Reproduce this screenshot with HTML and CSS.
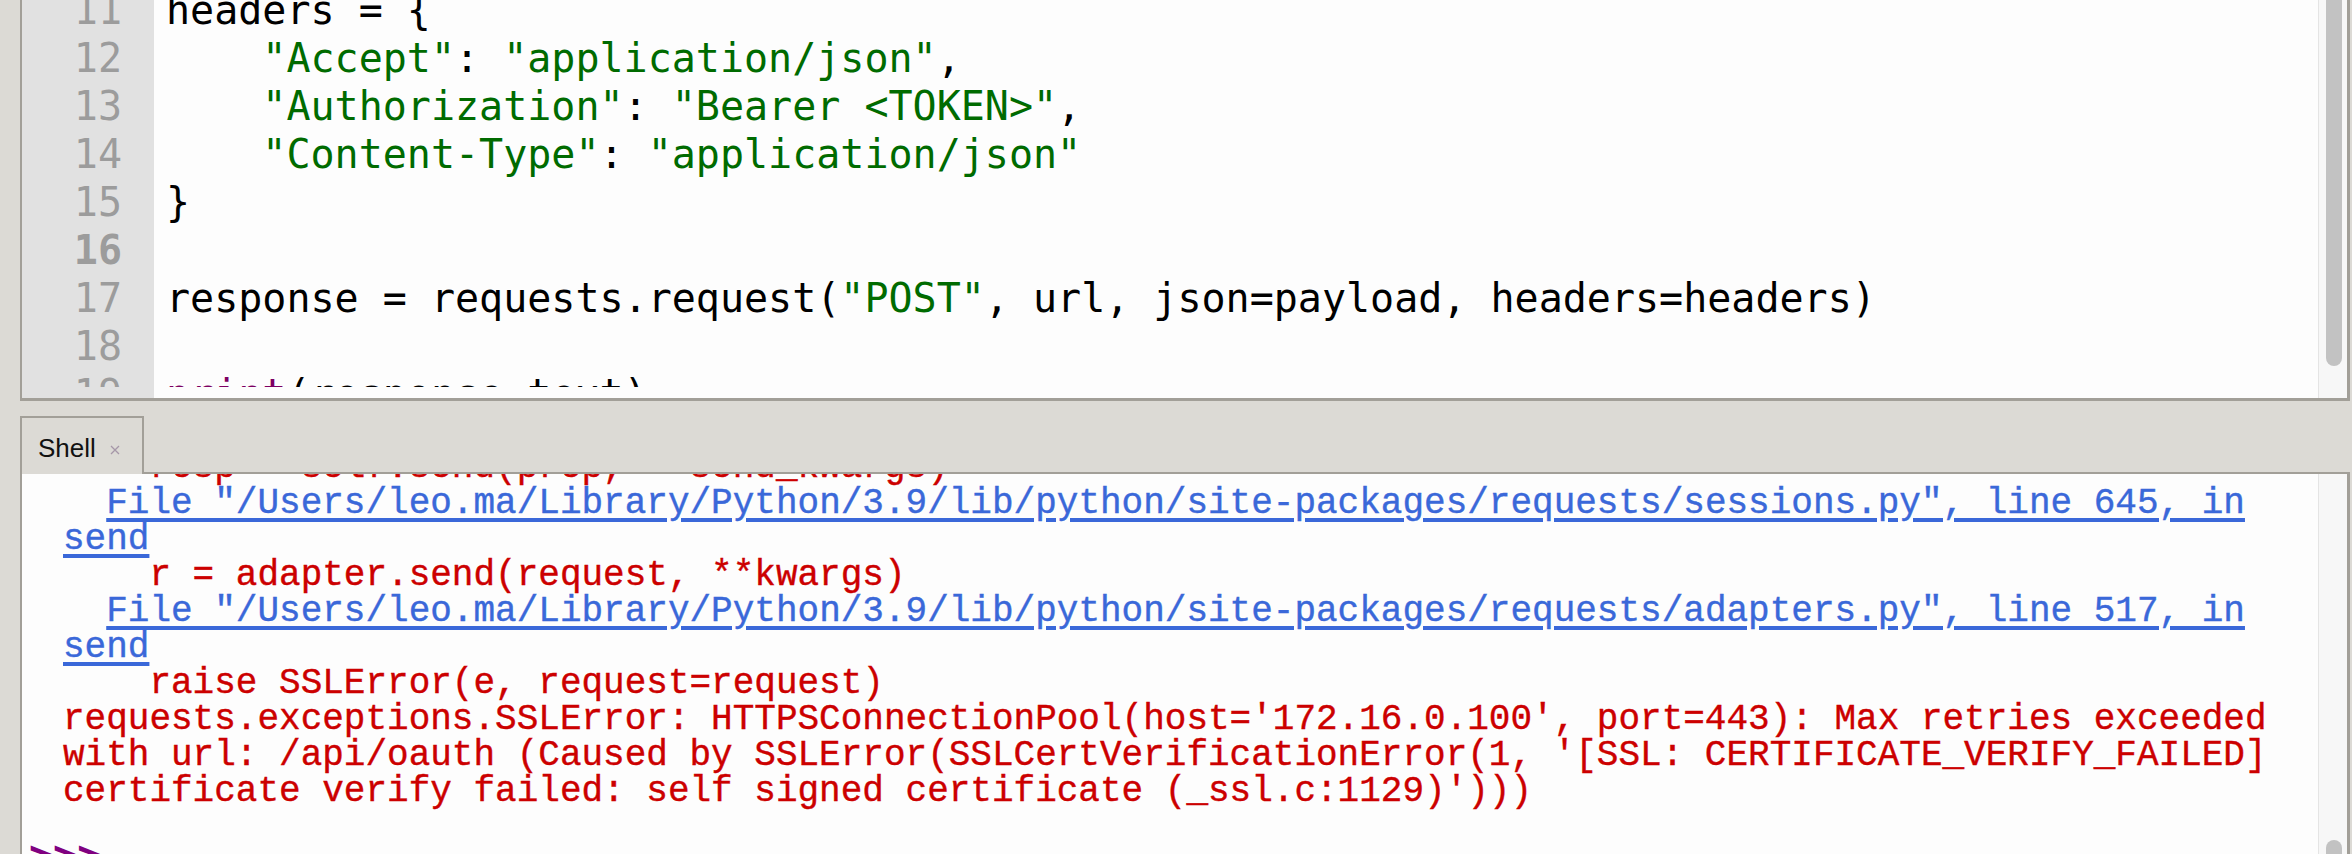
FILE: index.html
```html
<!DOCTYPE html>
<html>
<head>
<meta charset="utf-8">
<title>Thonny</title>
<link rel="stylesheet" href="styles.css">
</head>
<body>
<div class="app">
  <section class="editor">
    <div class="gutter">
      <div class="clip">
        <div class="ed-lines">
          <div class="ln">11</div>
          <div class="ln">12</div>
          <div class="ln">13</div>
          <div class="ln">14</div>
          <div class="ln">15</div>
          <div class="ln cur">16</div>
          <div class="ln">17</div>
          <div class="ln">18</div>
          <div class="ln">19</div>
        </div>
      </div>
    </div>
    <div class="code">
      <div class="clip">
        <div class="ed-lines">
          <div class="ln">headers = {</div>
          <div class="ln">    <span class="str">"Accept"</span>: <span class="str">"application/json"</span>,</div>
          <div class="ln">    <span class="str">"Authorization"</span>: <span class="str">"Bearer &lt;TOKEN&gt;"</span>,</div>
          <div class="ln">    <span class="str">"Content-Type"</span>: <span class="str">"application/json"</span></div>
          <div class="ln">}</div>
          <div class="ln"> </div>
          <div class="ln">response = requests.request(<span class="str">"POST"</span>, url, json=payload, headers=headers)</div>
          <div class="ln"> </div>
          <div class="ln"><span class="builtin">print</span>(response.text)</div>
        </div>
      </div>
    </div>
    <div class="vscroll"><div class="thumb thumb-top"></div></div>
  </section>

  <div class="tabbar">
    <div class="tab">
      <span class="tab-label">Shell</span>
      <svg class="tab-close" width="12" height="12" viewBox="0 0 12 12"><path d="M2 2 L10 10 M10 2 L2 10" stroke="#a697a8" stroke-width="1.3" fill="none"/></svg>
    </div>
    <div class="tabfill"></div>
  </div>

  <section class="shell">
    <div class="shell-text">
      <div class="sh-lines">
        <div class="sl out err">    resp = self.send(prep, **send_kwargs)</div>
        <div class="sl out">  <span class="link">File "/Users/leo.ma/Library/Python/3.9/lib/python/site-packages/requests/sessions.py", line 645, in</span></div>
        <div class="sl out"><span class="link">send</span></div>
        <div class="sl out err">    r = adapter.send(request, **kwargs)</div>
        <div class="sl out">  <span class="link">File "/Users/leo.ma/Library/Python/3.9/lib/python/site-packages/requests/adapters.py", line 517, in</span></div>
        <div class="sl out"><span class="link">send</span></div>
        <div class="sl out err">    raise SSLError(e, request=request)</div>
        <div class="sl out err">requests.exceptions.SSLError: HTTPSConnectionPool(host='172.16.0.100', port=443): Max retries exceeded</div>
        <div class="sl out err">with url: /api/oauth (Caused by SSLError(SSLCertVerificationError(1, '[SSL: CERTIFICATE_VERIFY_FAILED]</div>
        <div class="sl out err">certificate verify failed: self signed certificate (_ssl.c:1129)')))</div>
        <div class="sl out"> </div>
        <div class="sl prompt">&gt;&gt;&gt; </div>
      </div>
    </div>
    <div class="vscroll"><div class="thumb thumb-bottom"></div></div>
  </section>
</div>
</body>
</html>
```

FILE: styles.css
```css
* { box-sizing: border-box; }

html, body {
  margin: 0;
  padding: 0;
}

body {
  background: #dcdad5;
  width: 2352px;
  height: 854px;
  overflow: hidden;
}

.app {
  display: flex;
  flex-direction: column;
  height: 854px;
}

/* ---------- editor ---------- */
.editor {
  flex: none;
  display: flex;
  margin-left: 20px;
  width: 2330px;
  height: 401px;
  border-left: 2px solid #a29f98;
  border-right: 3px solid #a29f98;
  border-bottom: 3px solid #a29f98;
}

.gutter {
  flex: none;
  width: 132px;
  background: #e1e1e1;
}

.code {
  flex: 1;
  background: #fdfdfd;
}

.clip {
  height: 387px;
  overflow: hidden;
}

.ed-lines {
  margin-top: -14px;
  font-family: "DejaVu Sans Mono", monospace;
  font-size: 40px;
  line-height: 48px;
}

.ln {
  white-space: pre;
  height: 48px;
}

.gutter .ed-lines {
  text-align: right;
  padding-right: 32px;
  color: #9c9c9c;
}

.gutter .cur {
  font-weight: bold;
}

.code .ed-lines {
  padding-left: 12px;
  color: #000;
}

.str { color: #006b00; }
.builtin { color: #7d0062; }

/* ---------- scrollbars ---------- */
.vscroll {
  flex: none;
  width: 29px;
  background: #f7f7f7;
  border-left: 1px solid #e4e4e4;
  padding-left: 7px;
}

.thumb {
  width: 16px;
  background: #c2c2c2;
}

.thumb-top {
  height: 366px;
  border-radius: 0 0 8px 8px;
}

.thumb-bottom {
  margin-top: 366px;
  height: 40px;
  border-radius: 8px 8px 0 0;
}

/* ---------- tab bar ---------- */
.tabbar {
  flex: none;
  display: flex;
  margin-top: 15px;
  margin-left: 20px;
  width: 2330px;
  height: 58px;
}

.tab {
  flex: none;
  display: flex;
  align-items: flex-start;
  width: 124px;
  height: 58px;
  border-top: 2px solid #a29f98;
  border-left: 2px solid #a29f98;
  border-right: 2px solid #a29f98;
  background: #dcdad5;
  padding-left: 16px;
  padding-top: 4px;
}

.tab-label {
  font-family: "Liberation Sans", Arial, sans-serif;
  font-size: 26px;
  line-height: 52px;
  color: #111;
}

.tab-close {
  margin-left: 13px;
  margin-top: 22px;
}

.tabfill {
  flex: 1;
  border-bottom: 2px solid #a29f98;
}

/* ---------- shell ---------- */
.shell {
  flex: 1;
  display: flex;
  margin-left: 20px;
  width: 2330px;
  border-left: 2px solid #a29f98;
  border-right: 3px solid #a29f98;
  min-height: 0;
}

.shell-text {
  flex: 1;
  background: #fdfdfd;
  overflow: hidden;
  padding-left: 7px;
}

.sh-lines {
  margin-top: -24px;
  font-family: "Liberation Mono", "Courier New", monospace;
  font-size: 36px;
  line-height: 36px;
}

.sl {
  white-space: pre;
  height: 36px;
}

.out {
  padding-left: 34px;
  -webkit-text-stroke: 0.4px currentColor;
}

.err { color: #cc0000; }

.link {
  color: #3a68d9;
  text-decoration: underline;
  text-decoration-thickness: 4px;
  text-underline-offset: 5px;
}

.prompt {
  margin-top: -9px;
  font-family: "DejaVu Sans Mono", monospace;
  font-weight: bold;
  font-size: 40px;
  line-height: 36px;
  color: #800080;
}
```
